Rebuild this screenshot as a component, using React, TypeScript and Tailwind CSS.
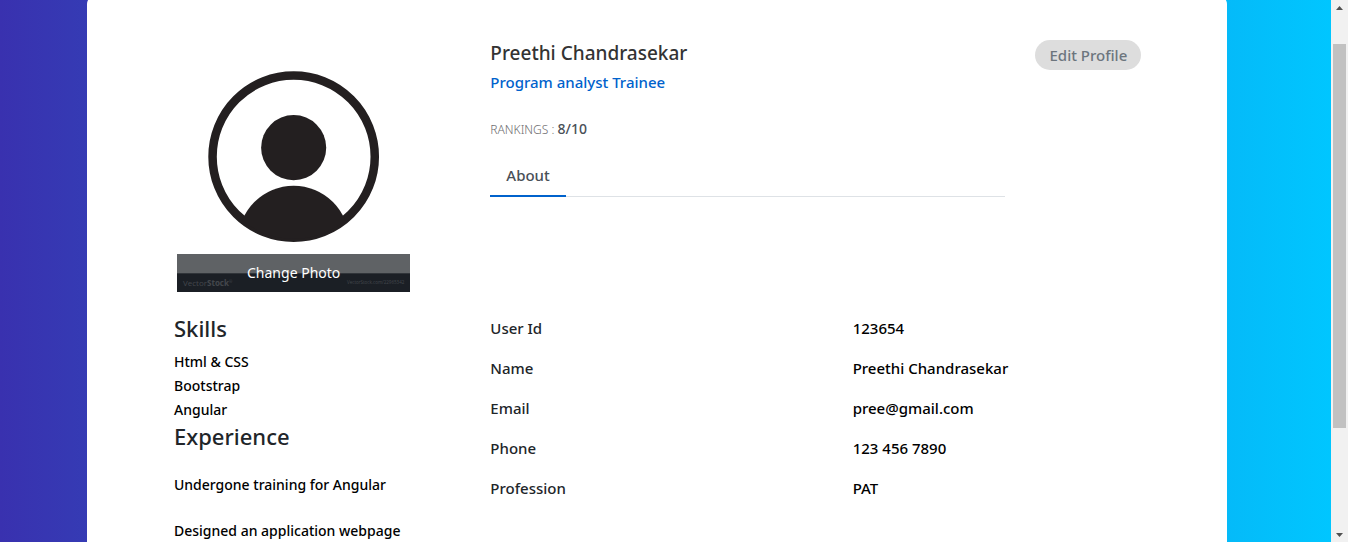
const details = [
  { label: 'User Id', value: '123654' },
  { label: 'Name', value: 'Preethi Chandrasekar' },
  { label: 'Email', value: 'pree@gmail.com' },
  { label: 'Phone', value: '123 456 7890' },
  { label: 'Profession', value: 'PAT' },
];

const skills = ['Html & CSS', 'Bootstrap', 'Angular'];
const experience = ['Undergone training for Angular', 'Designed an application webpage'];

function Avatar() {
  return (
    <svg viewBox="0 0 233 252" className="block w-full" role="img" aria-label="Profile photo">
      <rect width="233" height="252" fill="#fff" />
      <clipPath id="ring">
        <circle cx="116.5" cy="116.5" r="82" />
      </clipPath>
      <circle cx="116.5" cy="116.5" r="81" fill="none" stroke="#231f20" strokeWidth="8.5" />
      <circle cx="116.5" cy="107.5" r="32.5" fill="#231f20" />
      <circle cx="116.5" cy="201" r="55.5" fill="#231f20" clipPath="url(#ring)" />
      <rect y="233" width="233" height="19" fill="#0b0f1a" />
      <g fill="#9a9ca2" fontFamily="Open Sans, sans-serif">
        <text x="6" y="246" fontSize="8">
          Vector<tspan fontWeight="700">Stock</tspan>
          <tspan fontSize="4" dy="-3">®</tspan>
        </text>
        <text x="227" y="244" fontSize="4.5" textAnchor="end">VectorStock.com/22965342</text>
      </g>
    </svg>
  );
}

function Photo() {
  return (
    <div className="relative mx-auto w-[70%]">
      <Avatar />
      <label className="absolute inset-x-0 bottom-0 flex h-[38px] cursor-pointer items-center justify-center bg-[#212529b8] text-sm text-white">
        Change Photo
        <input type="file" name="photo" className="sr-only" />
      </label>
    </div>
  );
}

function Scrollbar() {
  return (
    <div className="flex w-[17px] shrink-0 flex-col items-center bg-[#f1f1f1]" aria-hidden="true">
      <svg viewBox="0 0 17 17" className="h-[17px] w-[17px]">
        <path d="M5 10h7L8.500 6z" fill="#505050" />
      </svg>
      <div className="mt-[27px] w-[13px] grow-[384] bg-[#c1c1c1]" />
      <div className="grow-[97]" />
      <svg viewBox="0 0 17 17" className="h-[17px] w-[17px]">
        <path d="M5 8h7L8.500 12z" fill="#505050" />
      </svg>
    </div>
  );
}

export default function App() {
  return (
    <div className="flex h-screen overflow-hidden font-['Noto_Sans','Open_Sans',sans-serif]">
      <div className="min-w-0 flex-1 bg-linear-to-r/srgb from-[#3931af] to-[#00c6ff] pr-[17px]">
        <main className="mx-auto -mt-1 min-h-[calc(100%+4px)] max-w-[1140px] rounded-t-lg bg-white px-[25px] pt-11">
          <div className="grid grid-cols-12">
            <div className="col-span-4 px-[15px]">
              <Photo />
            </div>

            <div className="col-span-6 px-[15px]">
              <h1 className="text-[19px] leading-[26px] font-medium text-[#333]">Preethi Chandrasekar</h1>
              <h2 className="mt-1.5 text-[15px] leading-5 font-medium text-[#0062cc]">Program analyst Trainee</h2>
              <p className="mt-[26px] text-xs leading-6 font-light text-[#6c6c6e]">
                RANKINGS : <span className="text-sm font-medium text-[#495057]">8/10</span>
              </p>
              <div className="mt-4 flex border-b border-[#dee2e6]">
                <button type="button" className="-mb-px border-b-2 border-[#0062cc] px-4 pt-[5px] pb-2 text-[15px] leading-6 font-medium text-[#495057]">
                  About
                </button>
              </div>
            </div>

            <div className="col-span-2 px-[15px]">
              <button type="button" className="h-[30px] w-[70%] rounded-full bg-[#ddd] text-[15px] font-medium whitespace-nowrap text-[#6c757d]">
                Edit Profile
              </button>
            </div>
          </div>

          <div className="grid grid-cols-12 pt-6">
            <div className="col-span-4 pr-[15px] pl-[62px] text-sm font-medium text-black">
              <h3 className="text-[22px] leading-6 font-medium text-[#212529]">Skills</h3>
              <ul className="mt-2.5">
                {skills.map((skill) => (
                  <li key={skill} className="leading-6">{skill}</li>
                ))}
              </ul>
              <h3 className="mt-0.5 text-[22px] leading-6 font-medium text-[#212529]">Experience</h3>
              <ul className="mt-[26px] flex flex-col gap-6">
                {experience.map((item) => (
                  <li key={item} className="leading-[22px] whitespace-nowrap">{item}</li>
                ))}
              </ul>
            </div>

            <dl className="col-span-8 flex flex-col gap-4 px-[15px] text-[15px] leading-6 font-medium">
              {details.map(({ label, value }) => (
                <div key={label} className="grid grid-cols-2 gap-7">
                  <dt className="text-[#212529]">{label}</dt>
                  <dd className="text-black">{value}</dd>
                </div>
              ))}
            </dl>
          </div>
        </main>
      </div>
      <Scrollbar />
    </div>
  );
}
